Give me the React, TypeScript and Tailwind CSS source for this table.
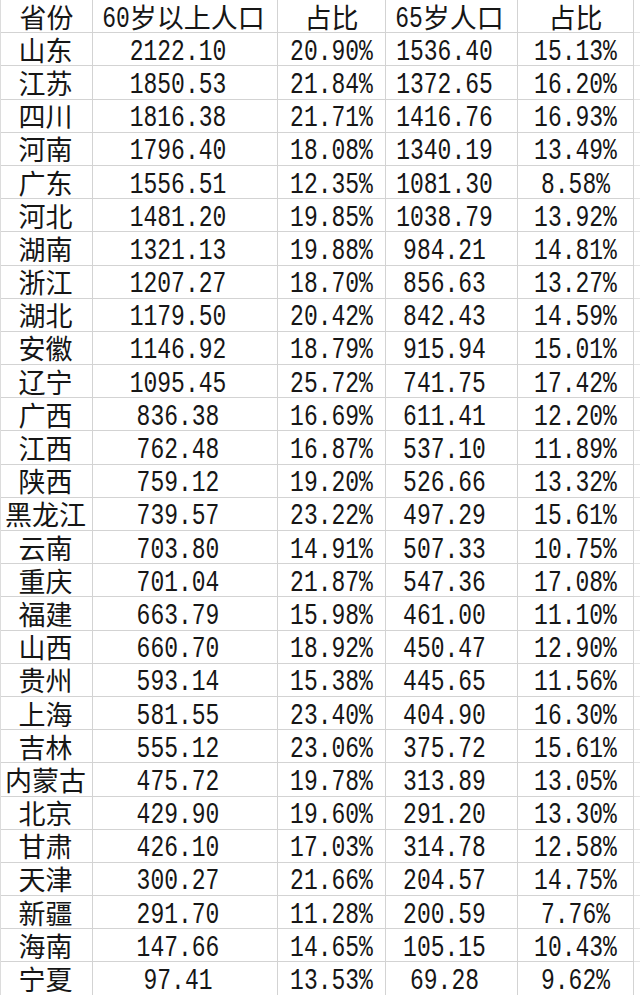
import React from 'react';

const rows: [string, string, string, string, string][] = [
  ['山东', '2122.10', '20.90%', '1536.40', '15.13%'],
  ['江苏', '1850.53', '21.84%', '1372.65', '16.20%'],
  ['四川', '1816.38', '21.71%', '1416.76', '16.93%'],
  ['河南', '1796.40', '18.08%', '1340.19', '13.49%'],
  ['广东', '1556.51', '12.35%', '1081.30', '8.58%'],
  ['河北', '1481.20', '19.85%', '1038.79', '13.92%'],
  ['湖南', '1321.13', '19.88%', '984.21', '14.81%'],
  ['浙江', '1207.27', '18.70%', '856.63', '13.27%'],
  ['湖北', '1179.50', '20.42%', '842.43', '14.59%'],
  ['安徽', '1146.92', '18.79%', '915.94', '15.01%'],
  ['辽宁', '1095.45', '25.72%', '741.75', '17.42%'],
  ['广西', '836.38', '16.69%', '611.41', '12.20%'],
  ['江西', '762.48', '16.87%', '537.10', '11.89%'],
  ['陕西', '759.12', '19.20%', '526.66', '13.32%'],
  ['黑龙江', '739.57', '23.22%', '497.29', '15.61%'],
  ['云南', '703.80', '14.91%', '507.33', '10.75%'],
  ['重庆', '701.04', '21.87%', '547.36', '17.08%'],
  ['福建', '663.79', '15.98%', '461.00', '11.10%'],
  ['山西', '660.70', '18.92%', '450.47', '12.90%'],
  ['贵州', '593.14', '15.38%', '445.65', '11.56%'],
  ['上海', '581.55', '23.40%', '404.90', '16.30%'],
  ['吉林', '555.12', '23.06%', '375.72', '15.61%'],
  ['内蒙古', '475.72', '19.78%', '313.89', '13.05%'],
  ['北京', '429.90', '19.60%', '291.20', '13.30%'],
  ['甘肃', '426.10', '17.03%', '314.78', '12.58%'],
  ['天津', '300.27', '21.66%', '204.57', '14.75%'],
  ['新疆', '291.70', '11.28%', '200.59', '7.76%'],
  ['海南', '147.66', '14.65%', '105.15', '10.43%'],
  ['宁夏', '97.41', '13.53%', '69.28', '9.62%'],
];

// rows are ~33.2px: 30 rows fill the 995px shot, the last one slightly cut
const cell = 'h-[33.2px] flex items-center justify-center border-r border-b border-[#d3d3d3] whitespace-nowrap';
const cjk = "font-['Noto_Sans_CJK_SC',sans-serif] text-[27px] leading-none";
const num = "inline-block font-['Liberation_Mono','Courier_New',monospace] text-[23px] leading-none scale-y-[1.32] translate-y-[3px]";

const Num = ({ v }: { v: string }) => <span className={num}>{v}</span>;

export default function App() {
  return (
    <div className="w-[640px] h-[995px] overflow-hidden bg-white text-[#161616]">
      <div className="grid grid-cols-[92px_185px_108px_132px_116px_7px] border-l border-[#dcdcdc]">
        {/* header */}
        <div className={cell}><span className={cjk}>省份</span></div>
        <div className={`${cell} pr-[3px]`}>
          <span className="flex items-center">
            <Num v="60" />
            <span className={cjk}>岁以上人口</span>
          </span>
        </div>
        <div className={cell}><span className={cjk}>占比</span></div>
        <div className={`${cell} pr-[4px]`}>
          <span className="flex items-center">
            <Num v="65" />
            <span className={cjk}>岁人口</span>
          </span>
        </div>
        <div className={cell}><span className={cjk}>占比</span></div>
        <div className="border-b border-[#e4e4e4]" />

        {rows.map((r) => (
          <React.Fragment key={r[0]}>
            <div className={`${cell} pr-[2px]`}><span className={cjk}>{r[0]}</span></div>
            <div className={`${cell} pr-[14px]`}><Num v={r[1]} /></div>
            <div className={cell}><Num v={r[2]} /></div>
            <div className={`${cell} pr-[14px]`}><Num v={r[3]} /></div>
            <div className={cell}><Num v={r[4]} /></div>
            <div className="border-b border-[#e4e4e4]" />
          </React.Fragment>
        ))}
      </div>
    </div>
  );
}
